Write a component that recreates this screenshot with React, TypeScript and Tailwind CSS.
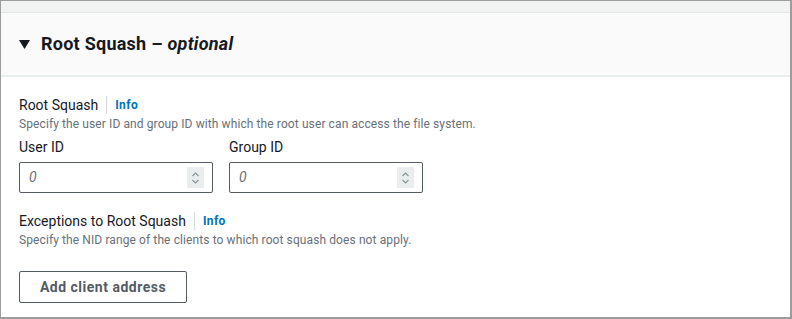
import React from "react";

function Spinner() {
  return (
    <div className="flex h-[21px] w-[17px] flex-col items-center justify-center bg-[#eaeded]">
      <svg width="9" height="14" viewBox="0 0 9 14" fill="none" stroke="#879596" strokeWidth="1.2">
        <path d="M1.5 5 L4.5 2 L7.5 5" />
        <path d="M1.5 9 L4.5 12 L7.5 9" />
      </svg>
    </div>
  );
}

function NumberInput() {
  return (
    <div className="flex h-[31px] w-[194px] items-center justify-between rounded-[2px] border border-[#545b64] pl-[9px] pr-[8px]">
      <span className="text-[14px] italic text-[#687078]">0</span>
      <Spinner />
    </div>
  );
}

function Label({ text }: { text: string }) {
  return (
    <div className="flex items-center">
      <span className="text-[14px] leading-[20px] text-[#16191f]">{text}</span>
      <span className="mx-[8px] h-[18px] w-px bg-[#d5dbdb]" />
      <span className="text-[12px] font-bold tracking-[0.4px] text-[#0073bb]">Info</span>
    </div>
  );
}

export default function App() {
  return (
    <div
      className="h-[319px] w-[792px] border border-r-2 border-b-2 border-[#9c9c9c] bg-white"
      style={{ fontFamily: "Roboto, Arial, sans-serif" }}
    >
      <div className="h-[12px] border-b border-[#e1e6e6] bg-[#f1f3f3]" />
      <div className="flex h-[64px] items-center border-b-2 border-[#eaeded] bg-[#fafafa] pl-[18px]">
        <svg width="11" height="9" viewBox="0 0 11 9" className="mr-[11px] mt-[1px]">
          <path d="M0 0 L11 0 L5.5 9 Z" fill="#16191f" />
        </svg>
        <span className="text-[18px] font-bold leading-[24px] tracking-[0.25px] text-[#16191f]">
          Root Squash – <i>optional</i>
        </span>
      </div>
      <div className="px-[18px] pt-[18px]">
        <Label text="Root Squash" />
        <div className="mt-[1px] text-[12px] leading-[16px] tracking-[0.1px] text-[#687078]">
          Specify the user ID and group ID with which the root user can access the file system.
        </div>
        <div className="mt-[5px] flex gap-[16px]">
          <div className="flex flex-col">
            <span className="text-[14px] leading-[20px] text-[#16191f]">User ID</span>
            <div className="mt-[5px]">
              <NumberInput />
            </div>
          </div>
          <div className="flex flex-col">
            <span className="text-[14px] leading-[20px] text-[#16191f]">Group ID</span>
            <div className="mt-[5px]">
              <NumberInput />
            </div>
          </div>
        </div>
        <div className="mt-[18px]">
          <Label text="Exceptions to Root Squash" />
        </div>
        <div className="mt-[1px] text-[12px] leading-[16px] tracking-[0.1px] text-[#687078]">
          Specify the NID range of the clients to which root squash does not apply.
        </div>
        <button className="mt-[23px] flex h-[32px] w-[168px] items-center justify-center rounded-[2px] border border-[#545b64] bg-white text-[14px] font-bold tracking-[0.5px] text-[#545b64]">
          Add client address
        </button>
      </div>
    </div>
  );
}
